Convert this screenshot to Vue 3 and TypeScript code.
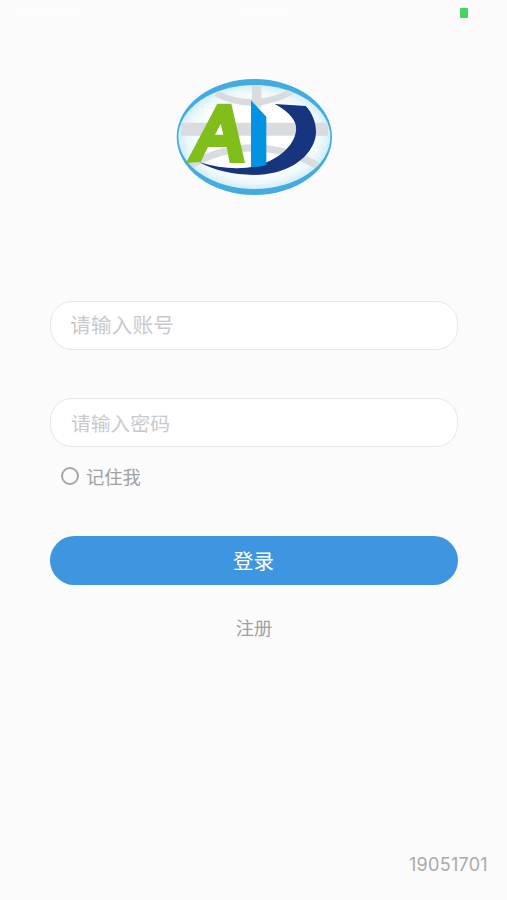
<script setup lang="ts">
import { ref } from 'vue'

const account = ref('')
const password = ref('')
const remember = ref(false)
const build = '19051701'
</script>

<template>
  <main class="screen">
    <header class="status">
      <span class="carrier"></span>
      <span class="clock"></span>
      <span class="battery"></span>
    </header>

    <svg class="logo" viewBox="0 0 510 390" aria-hidden="true">
      <defs>
        <radialGradient id="globe">
          <stop offset="0.68" stop-color="#ffffff" />
          <stop offset="0.88" stop-color="#edf8fb" />
          <stop offset="1" stop-color="#d0eef7" />
        </radialGradient>
        <clipPath id="inside"><ellipse cx="253" cy="201" rx="227" ry="157" /></clipPath>
      </defs>
      <ellipse cx="253" cy="201" rx="233" ry="174" fill="#42ace1" />
      <ellipse cx="253" cy="201" rx="228" ry="156" fill="url(#globe)" />
      <g clip-path="url(#inside)" fill="none" stroke="#d9dcde">
        <path d="M34 178H474" stroke-width="39" />
        <path d="M260 46V112" stroke-width="28" />
        <path d="M138 70Q252 128 366 64" stroke-width="19" />
        <path d="M62 286Q244 181 442 286" stroke-width="22" />
      </g>
      <path d="M88 277C165 301 242 301 292 276C350 251 382 207 378 169C374 143 347 119 314 102L407 108C432 133 445 177 434 211C420 256 375 292 318 307C248 325 147 310 88 277Z" fill="#17347f" />
      <path d="M243 91L289 140V285Q268 292 243 292Z" fill="#0692e2" />
      <path fill="#7fbe1b" d="M142 101H184L225 279H179L170 231H114L92 276L48 279Z" />
      <path fill="#ffffff" d="M152 162L135 194H160Z" />
    </svg>

    <form class="login" @submit.prevent>
      <input v-model="account" class="field account" type="text" placeholder="请输入账号" />
      <input v-model="password" class="field password" type="password" placeholder="请输入密码" />
      <label class="remember">
        <input v-model="remember" type="checkbox" />
        <span>记住我</span>
      </label>
      <button class="submit" type="submit">登录</button>
      <a class="register">注册</a>
    </form>

    <footer class="version">{{ build }}</footer>
  </main>
</template>

<style>
body {
  background: #fbfbfb;
}
</style>

<style scoped>
.screen {
  box-sizing: border-box;
  display: flex;
  flex-direction: column;
  width: 100%;
  height: 900px;
  overflow: hidden;
  background: #fbfbfb;
  font-family: "Liberation Sans", "Noto Sans CJK SC", sans-serif;
}

.status {
  display: grid;
  grid-template-columns: 64px 48px 8px;
  justify-content: space-between;
  height: 70px;
  box-sizing: border-box;
  padding: 8px 39px 0 16px;
}

.carrier,
.clock {
  height: 8px;
  background: #fdfdfd;
}

.clock {
  margin-left: -6px;
  margin-right: 6px;
}

.battery {
  height: 10px;
  border-radius: 1px;
  background: #47d562;
}

.logo {
  width: 170px;
  height: 130px;
  margin-left: 170px;
}

.login {
  display: flex;
  flex-direction: column;
  padding: 101px 49px 0 50px;
}

.field {
  box-sizing: border-box;
  width: 100%;
  height: 49px;
  padding: 0 19px 3px;
  border: 1px solid #e7e7e7;
  border-radius: 22px;
  outline: none;
  background: #fff;
  color: #555;
  font-family: "Noto Sans CJK SC", sans-serif;
  font-size: 20.8px;
}

.field::placeholder {
  color: #c9c9cc;
  opacity: 1;
}

.password {
  margin-top: 48px;
  padding: 0 20px 1px;
  font-size: 19.8px;
}

.remember {
  display: flex;
  align-items: center;
  gap: 7px;
  height: 26px;
  margin: 16px 0 0 11px;
  color: #a0a0a0;
  font-size: 18.3px;
}

.remember input {
  appearance: none;
  box-sizing: border-box;
  width: 18px;
  height: 18px;
  margin: 0;
  border: 2px solid #a6a6a6;
  border-radius: 50%;
}

.submit {
  height: 49px;
  margin-top: 47px;
  padding: 0 1px 1px 0;
  border: 0;
  border-radius: 25px;
  background: #3e95e0;
  color: #fff;
  font-family: "Noto Sans CJK SC", sans-serif;
  font-size: 20.5px;
}

.register {
  align-self: center;
  margin-top: 31px;
  color: #a0a0a0;
  font-size: 18.3px;
  line-height: 26px;
}

.version {
  margin: auto 19px 24px auto;
  color: #aaa;
  font-family: Inter, sans-serif;
  font-size: 18px;
  letter-spacing: 0.3px;
  line-height: 22px;
}
</style>
